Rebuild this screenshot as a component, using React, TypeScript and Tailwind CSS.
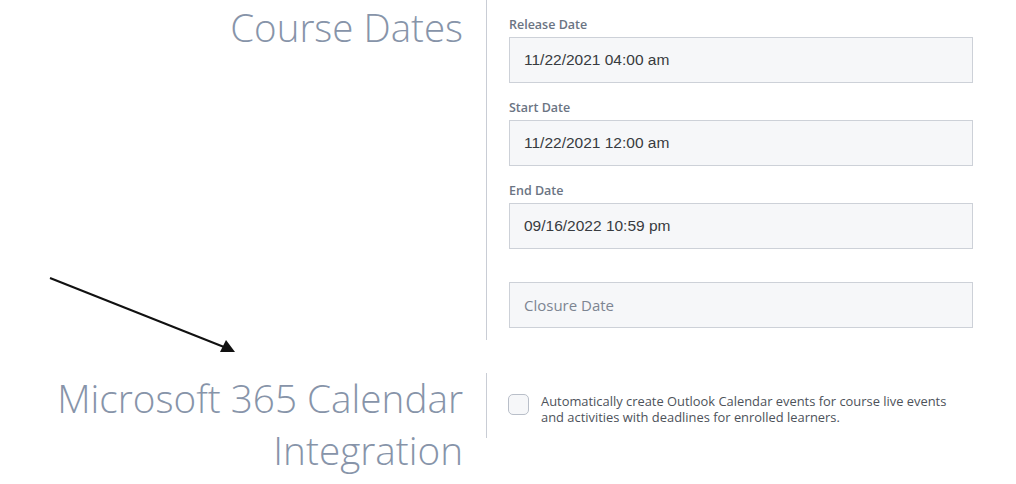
import React from 'react';

type Field = { label?: string; value?: string; placeholder?: string };

const fields: Field[] = [
  { label: 'Release Date', value: '11/22/2021 04:00 am' },
  { label: 'Start Date', value: '11/22/2021 12:00 am' },
  { label: 'End Date', value: '09/16/2022 10:59 pm' },
  { placeholder: 'Closure Date' },
];

const sans = { fontFamily: '"Open Sans", "Noto Sans", sans-serif' };

function DateInput({ field }: { field: Field }) {
  return (
    <div className="h-[46px] w-[464px] flex items-center bg-[#f6f7f9] border border-[#cdd1d8] px-[14px]">
      {field.value ? (
        <span className="text-[15.5px] text-[#383b40] font-['Liberation_Sans',Arial,sans-serif]">{field.value}</span>
      ) : (
        <span className="text-[15px] text-[#7d8592]">{field.placeholder}</span>
      )}
    </div>
  );
}

export default function App() {
  return (
    <div className="relative w-[1016px] h-[484px] bg-white overflow-hidden" style={sans}>
      {/* Course dates */}
      <section className="flex">
        <h2 className="w-[486px] pr-[23px] pt-[1px] text-right text-[38.5px] leading-[52px] font-light text-[#8794a9]">
          Course Dates
        </h2>
        <div className="border-l border-[#c9cdd5] pl-[22px] pt-[17px] pb-[12px]">
          {fields.map((f, i) => (
            <div key={i} className={i === 0 ? '' : f.label ? 'mt-[17px]' : 'mt-[33px]'}>
              {f.label && (
                <label className="block text-[12.5px] leading-[16px] font-semibold text-[#6b7483] mb-[4px]">
                  {f.label}
                </label>
              )}
              <DateInput field={f} />
            </div>
          ))}
        </div>
      </section>

      {/* Microsoft 365 */}
      <section className="flex mt-[32px]">
        <h2 className="w-[486px] pr-[23px] text-right text-[38.7px] leading-[52px] font-light text-[#8794a9]">
          Microsoft 365 Calendar
          <br />
          Integration
        </h2>
        <div className="self-start mt-[1px] h-[65px] border-l border-[#c9cdd5] pl-[21px] flex items-center gap-[12px]">
          <span className="w-[21px] h-[21px] -mt-[2px] shrink-0 rounded-[5px] border border-[#b9bfc9] bg-[#f6f7f9]" />
          <p className="w-[420px] mt-[6px] text-[12.9px] leading-[16px] text-[#4d525a]">
            Automatically create Outlook Calendar events for course live events and activities with deadlines for enrolled learners.
          </p>
        </div>
      </section>

      {/* annotation arrow */}
      <svg className="absolute left-0 top-0 pointer-events-none" width="1016" height="484">
        <line x1="50" y1="278" x2="224" y2="347" stroke="#111" strokeWidth="2" />
        <polygon points="235,352 220,352 226,340" fill="#111" />
      </svg>
    </div>
  );
}
